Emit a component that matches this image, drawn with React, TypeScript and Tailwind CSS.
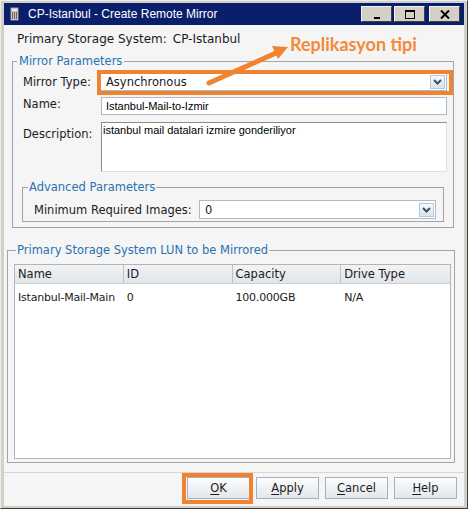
import React from "react";

const ui = "font-['DejaVu_Sans',Verdana,sans-serif] text-[11.5px] leading-[14px] text-[#1b1b1b]";
const arial = "font-['Liberation_Sans',Arial,sans-serif]";

function Chevron() {
  return (
    <svg width="9" height="6" viewBox="0 0 9 6">
      <path d="M1 1 L4.5 4.5 L8 1" fill="none" stroke="#3b4e66" strokeWidth="2" />
    </svg>
  );
}

function Combo({ value, className = "" }: { value: string; className?: string }) {
  return (
    <div className={`flex items-center border border-[#a9bccf] bg-white ${className}`}>
      <span className={`flex-1 pl-[5px] ${ui}`}>{value}</span>
      <span className="mr-[1px] flex h-[14px] w-[15px] items-center justify-center border border-[#b9c8d8] bg-gradient-to-b from-[#f8fafc] to-[#dbe3ec]">
        <Chevron />
      </span>
    </div>
  );
}

function ServerIcon() {
  return (
    <svg width="10" height="14" viewBox="0 0 10 14">
      <rect x="0.5" y="0.5" width="8" height="13" rx="1" fill="#c4c4c4" stroke="#5e5e5e" />
      <rect x="2" y="2" width="5" height="2" fill="#e8e8e8" />
      <path d="M2.5 5v7M4.5 5v7M6.5 5v7" stroke="#6b6b6b" strokeWidth="1" />
    </svg>
  );
}

function TitleButton({ children, className = "" }: { children: React.ReactNode; className?: string }) {
  return (
    <div
      className={`flex h-[16px] w-[31px] items-center justify-center border border-t-[#f4f4f4] border-l-[#f4f4f4] border-r-[#404040] border-b-[#404040] bg-[#d4d0c8] ${className}`}
    >
      {children}
    </div>
  );
}

function Button({ hot, rest }: { hot: string; rest: string }) {
  return (
    <div
      className={`flex h-[22px] w-[63px] items-center justify-center border border-[#9fb2c6] bg-gradient-to-b from-[#fcfdfd] to-[#e2e7ec] ${ui}`}
    >
      <span className="underline decoration-1 underline-offset-2">{hot}</span>
      {rest}
    </div>
  );
}

const columns = ["Name", "ID", "Capacity", "Drive Type"];
const row = ["Istanbul-Mail-Main", "0", "100.000GB", "N/A"];

export default function App() {
  return (
    <div className="relative h-[509px] w-[468px] overflow-hidden bg-white">
      <div className="flex h-full flex-col border border-t-[#ededed] border-l-[#ededed] border-r-[#3c3c3c] border-b-[#3c3c3c] bg-[#d4d0c8] px-[3px] pb-[2px] pt-[2px]">
        {/* title bar */}
        <div className="flex h-[22px] shrink-0 items-center bg-[#0a1f6c] pl-[6px] pr-[4px]">
          <ServerIcon />
          <span className={`ml-[8px] text-[12px] text-white ${arial}`}>CP-Istanbul - Create Remote Mirror</span>
          <div className="ml-auto flex items-center gap-[2px]">
            <TitleButton>
              <span className="mt-[7px] block h-[2px] w-[6px] bg-black" />
            </TitleButton>
            <TitleButton>
              <span className="block h-[9px] w-[10px] border border-t-2 border-black" />
            </TitleButton>
            <TitleButton className="ml-[2px]">
              <svg width="10" height="9" viewBox="0 0 10 9">
                <path d="M1 0.5 L9 8.5 M9 0.5 L1 8.5" stroke="#000" strokeWidth="2" />
              </svg>
            </TitleButton>
          </div>
        </div>

        {/* body */}
        <div className="relative flex flex-1 flex-col bg-[#f5f5f5] pt-[7px]">
          <div className={`flex pl-[13px] ${ui} text-[12px]`}>
            <span>Primary Storage System:</span>
            <span className="ml-[6px]">CP-Istanbul</span>
          </div>

          <fieldset className="ml-[8px] mr-[10px] mt-[8px] border border-[#a3a3a3] p-0">
            <legend className={`ml-[4px] px-[2px] ${ui} text-[#2a72b2]`}>Mirror Parameters</legend>
            <div className="flex flex-col pb-[5px] pl-[10px] pr-[6px] pt-[5px]">
              <div className="flex h-[18px] items-center">
                <span className={`w-[77px] ${ui}`}>Mirror Type:</span>
                <div className="relative h-[18px] flex-1">
                  <Combo value="Asynchronous" className="h-[18px]" />
                  <div className="pointer-events-none absolute -bottom-[4px] -left-[3px] -right-[6px] -top-[3px] border-4 border-[#f0832f]" />
                </div>
              </div>

              <div className="mt-[6px] flex h-[18px] items-start">
                <span className={`w-[78px] ${ui}`}>Name:</span>
                <div className={`flex h-[18px] flex-1 items-center border border-[#a9bccf] bg-white pl-[4px] text-[11px] text-black ${arial}`}>
                  Istanbul-Mail-to-Izmir
                </div>
              </div>

              <div className="mt-[7px] flex items-start">
                <span className={`w-[78px] pt-[5px] ${ui}`}>Description:</span>
                <div
                  className={`h-[50px] flex-1 border border-t-[#8c8c8c] border-l-[#8c8c8c] border-r-[#dedede] border-b-[#dedede] bg-white pl-[1px] pt-[1px] text-[11px] leading-[13px] text-black ${arial}`}
                >
                  istanbul mail datalari izmire gonderiliyor
                </div>
              </div>

              <fieldset className="-ml-[1px] mr-[3px] mt-[8px] border border-[#a3a3a3] p-0">
                <legend className={`ml-[5px] px-[1px] ${ui} text-[#2a72b2]`}>Advanced Parameters</legend>
                <div className="flex items-center pb-[2px] pl-[11px] pr-[7px] pt-[6px]">
                  <span className={`w-[165px] ${ui}`}>Minimum Required Images:</span>
                  <Combo value="0" className="h-[19px] flex-1" />
                </div>
              </fieldset>
            </div>
          </fieldset>

          <fieldset className="ml-[3px] mr-[9px] mt-[15px] h-[220px] border border-[#a3a3a3] p-0">
            <legend className={`ml-[8px] px-[1px] ${ui} text-[#2a72b2]`}>Primary Storage System LUN to be Mirrored</legend>
            <div className="pb-[3px] pl-[6px] pr-[3px] pt-[7px]">
              <div className="h-[195px] border border-[#b4b4b4] bg-white">
                <div className="grid h-[19px] grid-cols-4 border-b border-[#c9d0d6] bg-gradient-to-b from-[#f1f4f6] to-[#dfe5ea]">
                  {columns.map((c, i) => (
                    <div key={c} className={`flex items-center pl-[3px] ${ui} ${i < 3 ? "border-r border-[#b9c2ca]" : ""}`}>
                      {c}
                    </div>
                  ))}
                </div>
                <div className="mt-[4px] grid h-[20px] grid-cols-4">
                  {row.map((c, i) => (
                    <div key={i} className={`flex items-center pl-[3px] ${ui} text-[11px] tracking-[-0.2px]`}>
                      {c}
                    </div>
                  ))}
                </div>
              </div>
            </div>
          </fieldset>

          <div className="mt-[9px] border-t border-[#d6d6d6]" />
          <div className="mt-[4px] flex justify-end gap-[6px] pr-[7px]">
            <div className="relative">
              <Button hot="O" rest="K" />
              <div className="pointer-events-none absolute -bottom-[5px] -left-[5px] -right-[3px] -top-[4px] border-4 border-[#f0832f]" />
            </div>
            <Button hot="A" rest="pply" />
            <Button hot="C" rest="ancel" />
            <Button hot="H" rest="elp" />
          </div>
        </div>
      </div>

      {/* annotation */}
      <svg className="pointer-events-none absolute left-0 top-0" width="468" height="509">
        <line x1="209" y1="83" x2="276" y2="53" stroke="#f0832f" strokeWidth="5" strokeLinecap="round" />
        <polygon points="288,47 278,59 272,46" fill="#f0832f" />
      </svg>
      <span className="pointer-events-none absolute left-[290px] top-[35px] font-['Lato',sans-serif] text-[18px] font-bold leading-[18px] text-[#f28a39]">
        Replikasyon tipi
      </span>
    </div>
  );
}
